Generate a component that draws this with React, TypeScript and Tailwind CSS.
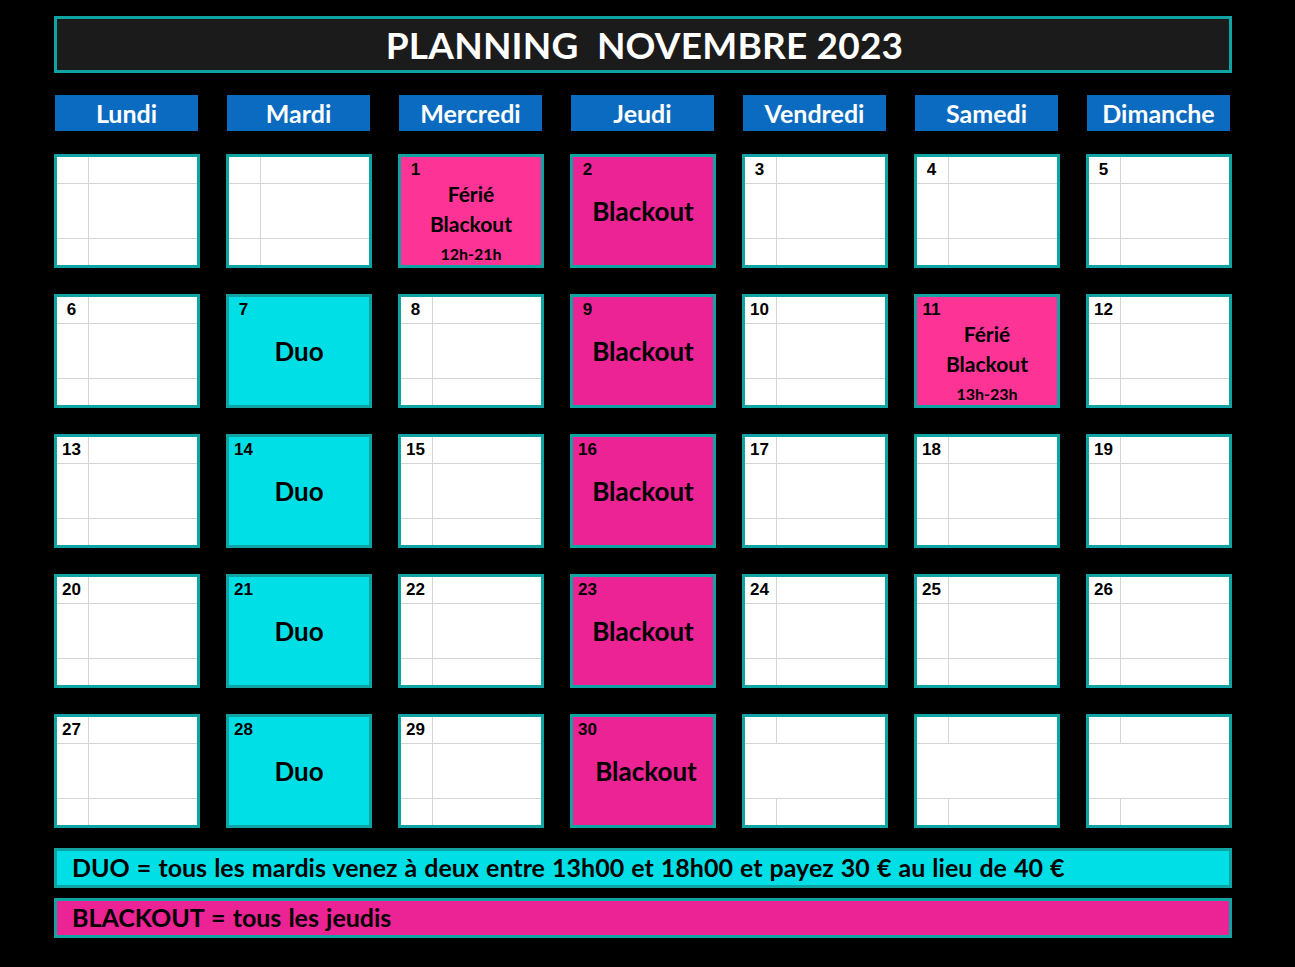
type Day = {
  n?: string;
  kind?: "white" | "duo" | "black" | "ferie";
  time?: string;
  split?: boolean;
  shift?: boolean;
};

const days = ["Lundi", "Mardi", "Mercredi", "Jeudi", "Vendredi", "Samedi", "Dimanche"];

const weeks: Day[][] = [
  [
    {},
    {},
    { n: "1", kind: "ferie", time: "12h-21h" },
    { n: "2", kind: "black" },
    { n: "3" },
    { n: "4" },
    { n: "5" },
  ],
  [
    { n: "6" },
    { n: "7", kind: "duo" },
    { n: "8" },
    { n: "9", kind: "black" },
    { n: "10" },
    { n: "11", kind: "ferie", time: "13h-23h" },
    { n: "12" },
  ],
  [
    { n: "13" },
    { n: "14", kind: "duo" },
    { n: "15" },
    { n: "16", kind: "black" },
    { n: "17" },
    { n: "18" },
    { n: "19" },
  ],
  [
    { n: "20" },
    { n: "21", kind: "duo" },
    { n: "22" },
    { n: "23", kind: "black" },
    { n: "24" },
    { n: "25" },
    { n: "26" },
  ],
  [
    { n: "27" },
    { n: "28", kind: "duo" },
    { n: "29" },
    { n: "30", kind: "black", shift: true },
    { split: true },
    { split: true },
    { split: true },
  ],
];

function Cell({ d }: { d: Day }) {
  const kind = d.kind ?? "white";
  const bg =
    kind === "duo"
      ? "bg-[#00dfe6]"
      : kind === "black"
      ? "bg-[#ec2394]"
      : kind === "ferie"
      ? "bg-[#fe3396]"
      : "bg-[#d4d4d4]";
  const part = kind === "white" ? "bg-white" : "";
  const merged = kind !== "white" || d.split;

  return (
    <div className="border-[3px] border-[#10a3a4] h-[114px]">
      <div className={`grid grid-cols-[31px_1fr] grid-rows-[26px_54px_1fr] gap-px h-full ${bg}`}>
        <div className={`${part} flex items-center justify-center pr-[2px] font-['Liberation_Sans',sans-serif] font-bold text-[17px] text-black`}>
          {d.n}
        </div>
        <div className={part}></div>
        {merged ? (
          <div className={`${part} col-span-2 flex flex-col items-center justify-center font-['Lato',sans-serif] font-bold text-black`}>
            {kind === "duo" && <span className="text-[26px] leading-none">Duo</span>}
            {kind === "black" && (
              <span className={`text-[26px] leading-none ${d.shift ? "ml-[6px]" : ""}`}>Blackout</span>
            )}
            {kind === "ferie" && (
              <div className="flex flex-col items-center -mt-[4px]">
                <span className="text-[21px] leading-[30px]">Férié</span>
                <span className="text-[21px] leading-[30px]">Blackout</span>
              </div>
            )}
          </div>
        ) : (
          <>
            <div className={part}></div>
            <div className={part}></div>
          </>
        )}
        <div className={`${part} ${kind === "ferie" ? "col-span-2 flex items-center justify-center pt-[3px]" : ""}`}>
          {kind === "ferie" && (
            <span className="font-['Lato',sans-serif] font-bold text-[16px] text-black leading-none">{d.time}</span>
          )}
        </div>
        {kind !== "ferie" && <div className={part}></div>}
      </div>
    </div>
  );
}

export default function App() {
  return (
    <div className="min-h-screen bg-black pt-4 pb-8">
      <div className="w-[1178px] ml-[54px] flex flex-col">
        <div className="h-[57px] border-[3px] border-[#10a3a4] bg-[#1b1b1b] flex items-center justify-center">
          <h1 className="font-['Lato',sans-serif] font-bold text-[37px] text-white whitespace-pre leading-none pl-[3px] tracking-[0.2px]">
            PLANNING  NOVEMBRE 2023
          </h1>
        </div>

        <div className="grid grid-cols-7 gap-[26px] mt-[22px]">
          {days.map((d) => (
            <div
              key={d}
              className="h-[36px] ml-px mr-[2px] bg-[#0b6bc0] flex items-center justify-center pt-[2px] font-['Lato',sans-serif] font-bold text-[25px] text-white"
            >
              {d}
            </div>
          ))}
        </div>

        <div className="flex flex-col gap-[26px] mt-[23px]">
          {weeks.map((w, i) => (
            <div key={i} className="grid grid-cols-7 gap-[26px]">
              {w.map((d, j) => (
                <Cell key={j} d={d} />
              ))}
            </div>
          ))}
        </div>

        <div className="mt-[20px] h-[40px] border-[3px] border-[#10a3a4] bg-[#00dfe6] flex items-center pl-[15px] font-['Lato',sans-serif] font-bold text-[25px] [word-spacing:1px] text-black">
          DUO = tous les mardis venez à deux entre 13h00 et 18h00 et payez 30 € au lieu de 40 €
        </div>
        <div className="mt-[10px] h-[40px] border-[3px] border-[#10a3a4] bg-[#ec2394] flex items-center pl-[15px] font-['Lato',sans-serif] font-bold text-[25px] [word-spacing:1px] text-black">
          BLACKOUT = tous les jeudis
        </div>
      </div>
    </div>
  );
}
